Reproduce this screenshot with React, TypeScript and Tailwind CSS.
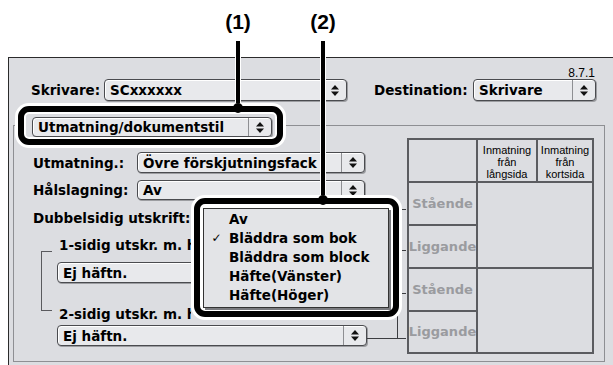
const charcoal = "font-['DejaVu_Sans',sans-serif] font-bold text-[13.5px] leading-[16px] text-black whitespace-nowrap";
const small = "font-['Liberation_Sans',Arial,sans-serif] text-[11px] leading-[12px] text-black";

const Arrows = () => (
  <svg width="8" height="11" viewBox="0 0 8 11" fill="#111">
    <path d="M0 4.5 L4 0 L8 4.5 Z" />
    <path d="M0 6.5 L8 6.5 L4 11 Z" />
  </svg>
);

const Popup = ({ text, className }: { text: string; className: string }) => (
  <div
    className={`flex shrink-0 rounded-[4px] border border-[#4a4b4f] bg-[#e8e9ec] shadow-[1px_1px_0_#9c9da1,inset_1px_1px_0_#fff] ${className}`}
  >
    <div className={`flex-1 flex items-center pl-[5px] overflow-hidden ${charcoal}`}>{text}</div>
    <div className="w-[23px] flex items-center justify-center border-l border-[#8e8f93]">
      <Arrows />
    </div>
  </div>
);

const RowLabel = ({ text }: { text: string }) => (
  <div className="bg-[#dcdde1] flex items-center justify-center font-['DejaVu_Sans',sans-serif] font-bold text-[13px] text-[#9a9b9f] whitespace-nowrap">
    {text}
  </div>
);

const HeadCell = ({ last }: { last: string }) => (
  <div className={`bg-[#dcdde1] flex flex-col items-center pt-[4px] ${small}`}>
    <span>Inmatning</span>
    <span>från</span>
    <span>{last}</span>
  </div>
);

export default function App() {
  return (
    <div className="relative w-[613px] h-[365px] overflow-hidden bg-white">
      {/* dialog window */}
      <div className="ml-[8px] mt-[57px] h-[308px] border-l border-t border-[#2b2b2b] bg-[#dcdde1]">
        <div className="flex justify-end pr-[18px] pt-[8px] h-[22px] font-['Liberation_Sans',Arial,sans-serif] text-[12px] leading-[14px] text-black">
          8.7.1
        </div>

        <div className="-mt-[1px] flex items-center h-[22px] pl-[22px]">
          <span className={`w-[73px] ${charcoal}`}>Skrivare:</span>
          <Popup text="SCxxxxxx" className="w-[243px] h-[22px]" />
          <span className={`ml-[27px] w-[99px] ${charcoal}`}>Destination:</span>
          <Popup text="Skrivare" className="w-[123px] h-[22px]" />
        </div>

        <div className="mt-[24px] ml-[4px] w-[592px] h-[237px] border border-[#8e8f93]">
          <div className="-mt-[9px] ml-[4px] w-[264px] pl-[14px] bg-[#dcdde1]">
            <Popup text="Utmatning/dokumentstil" className="w-[240px] h-[20px]" />
          </div>

          <div className="flex pl-[19px]">
            <div className="w-[374px] shrink-0 pt-[15px]">
              <div className="flex items-center h-[21px]">
                <span className={`w-[104px] ${charcoal}`}>Utmatning.:</span>
                <Popup text="Övre förskjutningsfack" className="w-[228px] h-[21px]" />
              </div>
              <div className="mt-[7px] flex items-center h-[20px]">
                <span className={`w-[104px] ${charcoal}`}>Hålslagning:</span>
                <Popup text="Av" className="w-[228px] h-[20px]" />
              </div>
              <div className={`mt-[10px] h-[16px] ${charcoal}`}>Dubbelsidig utskrift:</div>

              <div className="mt-[11px] flex">
                <div className="ml-[8px] mt-[14px] w-[11px] h-[60px] shrink-0 border-l border-y border-[#5a5a5e]" />
                <div className="ml-[5px]">
                  {/* the rest of these labels sits under callout (2) */}
                  <div className={`pl-[2px] w-[134px] h-[16px] overflow-hidden ${charcoal}`}>1-sidig utskr. m. häftning:</div>
                  <Popup text="Ej häftn." className="mt-[9px] w-[310px] h-[21px]" />
                  <div className={`mt-[23px] pl-[2px] w-[134px] h-[16px] overflow-hidden ${charcoal}`}>2-sidig utskr. m. häftning:</div>
                  <Popup text="Ej häftn." className="mt-[3px] w-[310px] h-[21px]" />
                </div>
              </div>
            </div>

            <div className="mt-[1px] w-[187px] grid grid-cols-[67px_58px_54px] grid-rows-[41px_41px_41px_41px_40px] gap-[2px] p-[2px] bg-[#5b5c60]">
              <div className="bg-[#dcdde1]" />
              <HeadCell last="långsida" />
              <HeadCell last="kortsida" />
              <RowLabel text="Stående" />
              <div className="bg-[#dcdde1] col-span-2 row-span-2" />
              <RowLabel text="Liggande" />
              <RowLabel text="Stående" />
              <div className="bg-[#dcdde1] col-span-2 row-span-2" />
              <RowLabel text="Liggande" />
            </div>
          </div>
        </div>
      </div>

      {/* connector lines between the staple popups and the table rows */}
      <svg
        className="absolute left-[360px] top-[200px]"
        width="50"
        height="160"
        viewBox="0 0 50 160"
        fill="none"
        stroke="#3c3d41"
        strokeWidth="1"
        shapeRendering="crispEdges"
      >
        <path d="M7 73.5 H37.5 M37.5 9 V74 M37.5 9.5 H46 M37.5 50.5 H46" />
        <path d="M37.5 93 V138 M37.5 93.5 H46 M7 138.5 H46" />
      </svg>

      {/* callout annotations */}
      <div className="absolute left-[215px] top-[9px] w-[46px] text-center font-['Liberation_Sans',Arial,sans-serif] font-bold text-[21px] leading-[26px] text-black">
        (1)
      </div>
      <div className="absolute left-[300px] top-[9px] w-[46px] text-center font-['Liberation_Sans',Arial,sans-serif] font-bold text-[21px] leading-[26px] text-black">
        (2)
      </div>

      <div className="absolute left-[236px] top-[41px] w-[4px] h-[66px] bg-black shadow-[0_0_0_1px_#fff]" />
      <div className="absolute left-[321px] top-[41px] w-[4px] h-[158px] bg-black shadow-[0_0_0_1px_#fff]" />

      <div className="absolute left-[18px] top-[106px] w-[265px] h-[39px] rounded-[11px] border-[6px] border-black shadow-[0_0_0_3px_#fff,inset_0_0_0_2px_#fff]" />

      <div className="absolute left-[194px] top-[198px] w-[205px] h-[119px] rounded-[11px] border-[6px] border-black bg-white pl-[3px] pt-[4px] shadow-[0_0_0_3px_#fff]">
        <div className="w-[186px] h-[100px] border border-[#333] bg-[#e3e4e7] shadow-[2px_2px_0_#7a7b7f]">
          {["Av", "Bläddra som bok", "Bläddra som block", "Häfte(Vänster)", "Häfte(Höger)"].map((item, i) => (
            <div key={item} className="flex items-center h-[19px]">
              <span className="w-[25px] text-center font-['DejaVu_Sans',sans-serif] text-[12px] leading-[16px] text-black">
                {i === 1 ? "✓" : ""}
              </span>
              <span className={charcoal}>{item}</span>
            </div>
          ))}
        </div>
      </div>

      <div className="absolute left-[233px] top-[103px] w-[10px] h-[10px] rounded-full bg-black" />
      <div className="absolute left-[318px] top-[195px] w-[10px] h-[10px] rounded-full bg-black" />
    </div>
  );
}
